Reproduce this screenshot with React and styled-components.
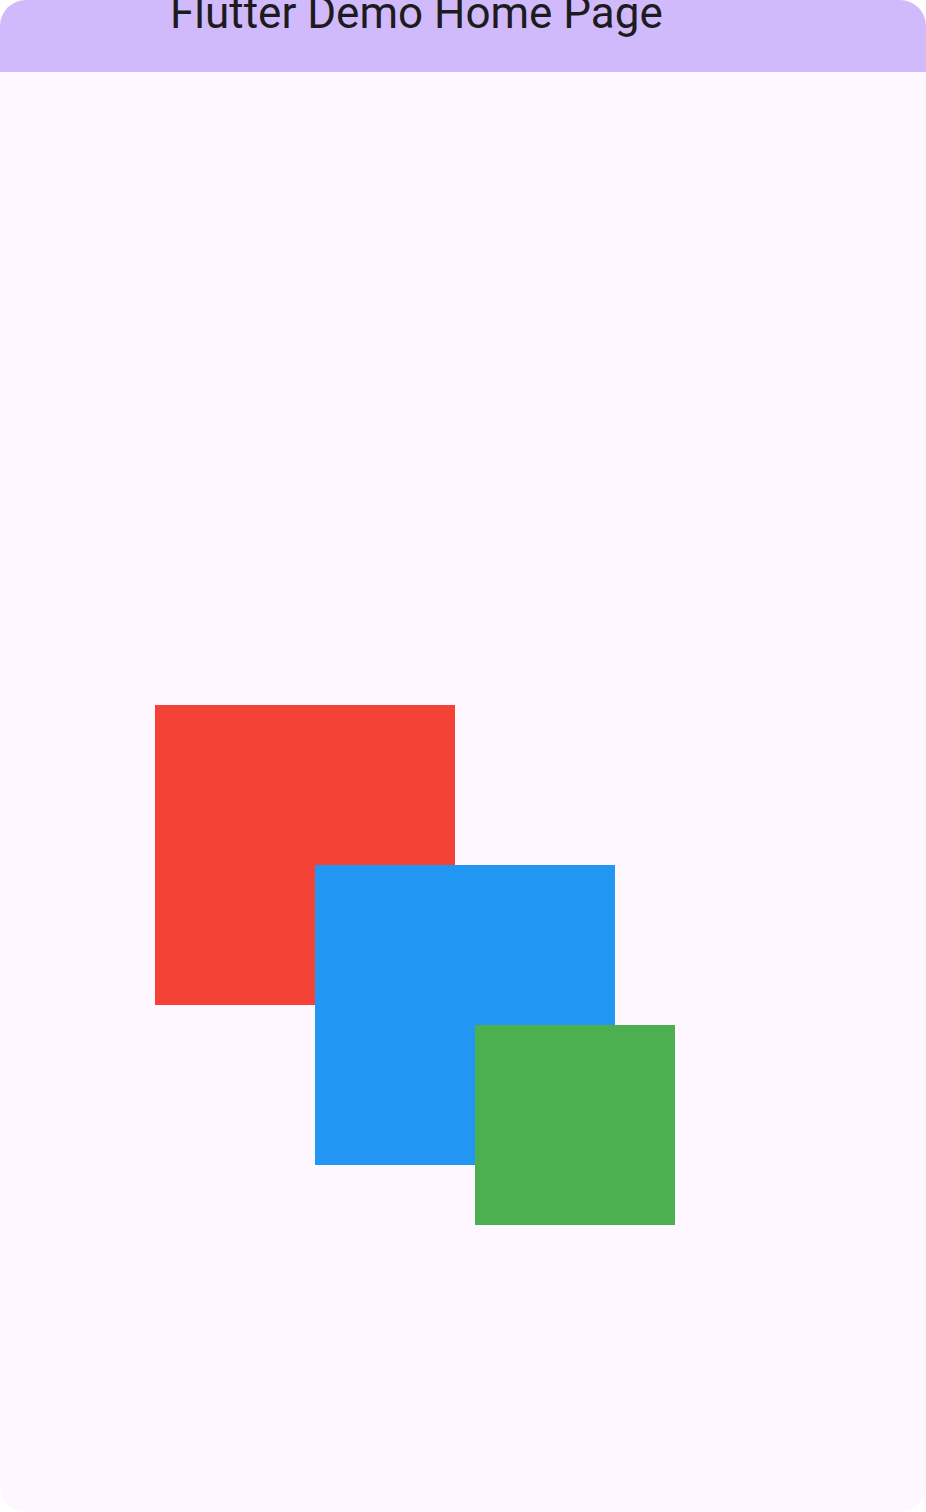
import styled, { createGlobalStyle } from "styled-components";

const GlobalStyle = createGlobalStyle`
  html, body {
    margin: 0;
    padding: 0;
    background: #ffffff;
  }
  body {
    font-family: Roboto, "Noto Sans", sans-serif;
  }
`;

const Frame = styled.div`
  width: 926px;
  height: 1512px;
  border-radius: 26px;
  overflow: hidden;
  background: #fef7ff;
  display: flex;
  flex-direction: column;
`;

const AppBar = styled.header`
  height: 72px;
  flex: none;
  background: #d1bafc;
  padding-left: 170px;
  overflow: hidden;
`;

const Title = styled.h1`
  margin: 0;
  font-family: Roboto, sans-serif;
  font-weight: 400;
  font-size: 44px;
  line-height: 44px;
  margin-top: -9px;
  color: #1d1b20;
  white-space: nowrap;
`;

const Body = styled.main`
  flex: 1;
  padding: 633px 0 0 155px;
`;

const Stack = styled.div`
  position: relative;
  width: 520px;
  height: 520px;
`;

const Square = styled.div`
  position: absolute;
  left: ${(p) => p.$x}px;
  top: ${(p) => p.$y}px;
  width: ${(p) => p.$size}px;
  height: ${(p) => p.$size}px;
  background: ${(p) => p.$color};
`;

export default function App() {
  return (
    <>
      <GlobalStyle />
      <Frame>
        <AppBar>
          <Title>Flutter Demo Home Page</Title>
        </AppBar>
        <Body>
          <Stack>
            <Square $x={0} $y={0} $size={300} $color="#f44336" />
            <Square $x={160} $y={160} $size={300} $color="#2196f3" />
            <Square $x={320} $y={320} $size={200} $color="#4caf50" />
          </Stack>
        </Body>
      </Frame>
    </>
  );
}
